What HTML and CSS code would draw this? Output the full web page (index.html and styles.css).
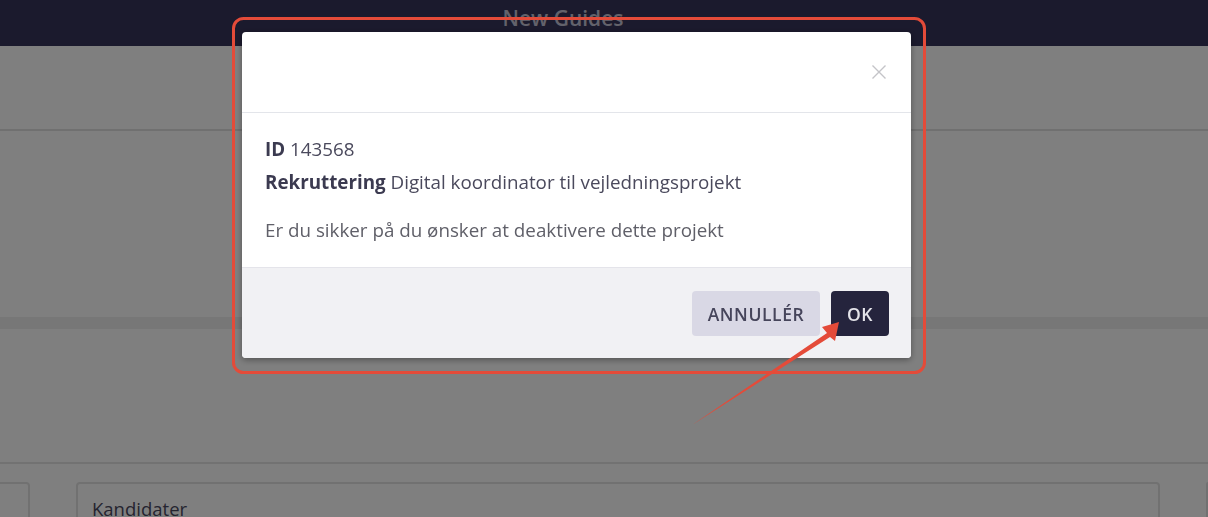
FILE: index.html
```html
<!DOCTYPE html>
<html lang="da">
<head>
    <meta charset="UTF-8">
    <meta name="viewport" content="width=device-width, initial-scale=1.0">
    <title>New Guides</title>
    <link rel="stylesheet" href="styles.css">
</head>
<body>
    <div class="topbar">
        <div class="topbar-title">New Guides</div>
    </div>
    <div class="subbar"></div>
    <div class="section"></div>
    <div class="band"></div>
    <div class="section section-lower"></div>
    <div class="cards">
        <div class="card card-cut"></div>
        <div class="card">
            <div class="card-title">Kandidater</div>
        </div>
        <div class="card"></div>
    </div>

    <div class="backdrop">
        <div class="modal">
            <div class="modal-header">
                <button type="button" class="modal-close" aria-label="Luk">
                    <svg width="16" height="16" viewBox="0 0 16 16">
                        <path d="M1.5 1.5 L14.5 14.5 M14.5 1.5 L1.5 14.5" stroke="#c4c4c8" stroke-width="1.4" fill="none"/>
                    </svg>
                </button>
            </div>
            <div class="modal-body">
                <p><strong>ID</strong> 143568</p>
                <p><strong>Rekruttering</strong> Digital koordinator til vejledningsprojekt</p>
                <p class="question">Er du sikker på du ønsker at deaktivere dette projekt</p>
            </div>
            <div class="modal-footer">
                <button type="button" class="btn btn-cancel">Annullér</button>
                <button type="button" class="btn btn-ok">OK</button>
            </div>
        </div>
    </div>

    <!-- annotation drawn on top of the screenshot -->
    <svg class="annotation" width="1208" height="517" viewBox="0 0 1208 517">
        <rect x="233.5" y="18.5" width="691" height="354" rx="10" ry="10" fill="none" stroke="#e44b39" stroke-width="3"/>
        <polygon points="692,425 827,333 822,327 839,322 835,341 830,337" fill="#e44b39"/>
    </svg>
</body>
</html>
```

FILE: styles.css
```css
body {
    margin: 0;
    font-family: 'Open Sans', 'Liberation Sans', sans-serif;
    background-color: white;
    color: #3b3a50;
    overflow: hidden;
}

.topbar {
    height: 46px;
    background-color: #37345a;
}

.topbar-title {
    padding: 4px 82px 0 0;
    text-align: center;
    color: #c6c5d6;
    font-size: 21px;
    font-weight: 600;
}

.subbar {
    height: 83px;
    border-bottom: 2px solid #e0e0e0;
}

.section {
    height: 186px;
}

.band {
    height: 12px;
    background-color: #eeeeee;
}

.section-lower {
    height: 133px;
    border-bottom: 2px solid #e4e4e4;
}

.cards {
    display: grid;
    grid-template-columns: 30px 1084px 1fr;
    column-gap: 46px;
    margin-top: 18px;
}

.card {
    height: 60px;
    border: 2px solid #e2e2e2;
    border-radius: 4px;
    box-sizing: border-box;
}

.card-cut {
    border-left: none;
    border-radius: 0 4px 4px 0;
}

.card-title {
    padding: 12px 0 0 14px;
    font-size: 18.5px;
    color: #4a4960;
}

/* modal */

.backdrop {
    position: fixed;
    top: 0;
    left: 0;
    right: 0;
    bottom: 0;
    background-color: rgba(0, 0, 0, 0.5);
}

.modal {
    width: 669px;
    margin: 32px 0 0 242px;
    background-color: white;
    border-radius: 4px;
    overflow: hidden;
    box-shadow: 0 2px 6px rgba(0, 0, 0, 0.35);
}

.modal-header {
    height: 80px;
    display: flex;
    align-items: center;
    justify-content: flex-end;
    padding-right: 24px;
    border-bottom: 1px solid #e3e5ea;
}

.modal-close {
    background: none;
    border: none;
    padding: 0;
    display: flex;
    cursor: pointer;
}

.modal-body {
    padding: 24px 23px 25px;
    font-size: 18.8px;
    line-height: 24px;
}

.modal-body p {
    margin: 0 0 9px;
    color: #4a495c;
}

.modal-body strong {
    color: #3b3a50;
    font-weight: 700;
}

.modal-body .question {
    margin: 24px 0 0;
    color: #606069;
}

.modal-footer {
    display: flex;
    justify-content: flex-end;
    gap: 11px;
    padding: 23px 22px 22px;
    background-color: #f1f1f4;
    border-top: 1px solid #e4e4ea;
}

.btn {
    height: 45px;
    border: none;
    border-radius: 4px;
    padding: 0 10px;
    font-family: inherit;
    font-size: 17.5px;
    font-weight: 600;
    letter-spacing: 0.6px;
    text-transform: uppercase;
    cursor: pointer;
}

.btn-cancel {
    width: 128px;
    background-color: #d9d8e5;
    color: #46455b;
}

.btn-ok {
    width: 58px;
    background-color: #25243d;
    color: #e4e4ea;
}

.annotation {
    position: fixed;
    top: 0;
    left: 0;
    pointer-events: none;
}
```
